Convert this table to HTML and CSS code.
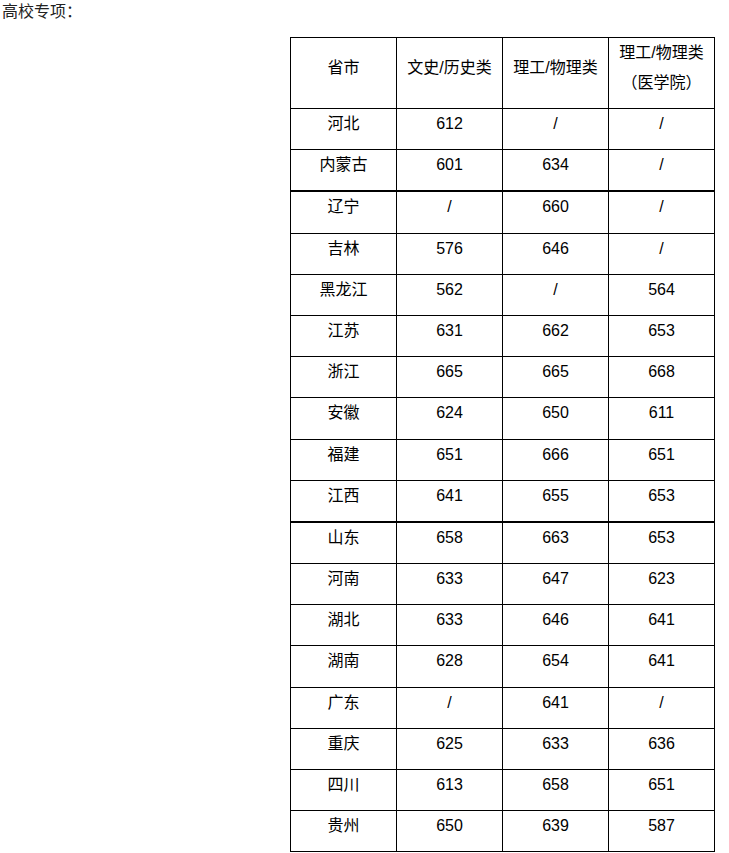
FILE: index.html
```html
<!DOCTYPE html>
<html lang="zh-CN">
<head>
<meta charset="utf-8">
<title>高校专项</title>
<link rel="stylesheet" href="styles.css">
</head>
<body>
<p class="title">高校专项：</p>
<table class="scores">
  <colgroup><col class="c"><col class="c"><col class="c"><col class="c"></colgroup>
  <thead>
    <tr><th>省市</th><th>文史/历史类</th><th>理工/物理类</th><th>理工/物理类<br>（医学院）</th></tr>
  </thead>
  <tbody>
    <tr><td>河北</td><td>612</td><td>/</td><td>/</td></tr>
    <tr><td>内蒙古</td><td>601</td><td>634</td><td>/</td></tr>
    <tr class="thick"><td>辽宁</td><td>/</td><td>660</td><td>/</td></tr>
    <tr><td>吉林</td><td>576</td><td>646</td><td>/</td></tr>
    <tr><td>黑龙江</td><td>562</td><td>/</td><td>564</td></tr>
    <tr><td>江苏</td><td>631</td><td>662</td><td>653</td></tr>
    <tr><td>浙江</td><td>665</td><td>665</td><td>668</td></tr>
    <tr><td>安徽</td><td>624</td><td>650</td><td>611</td></tr>
    <tr><td>福建</td><td>651</td><td>666</td><td>651</td></tr>
    <tr><td>江西</td><td>641</td><td>655</td><td>653</td></tr>
    <tr class="thick"><td>山东</td><td>658</td><td>663</td><td>653</td></tr>
    <tr><td>河南</td><td>633</td><td>647</td><td>623</td></tr>
    <tr><td>湖北</td><td>633</td><td>646</td><td>641</td></tr>
    <tr><td>湖南</td><td>628</td><td>654</td><td>641</td></tr>
    <tr><td>广东</td><td>/</td><td>641</td><td>/</td></tr>
    <tr><td>重庆</td><td>625</td><td>633</td><td>636</td></tr>
    <tr><td>四川</td><td>613</td><td>658</td><td>651</td></tr>
    <tr><td>贵州</td><td>650</td><td>639</td><td>587</td></tr>
  </tbody>
</table>
</body>
</html>
```
FILE: styles.css
```css
html, body {
  margin: 0;
  padding: 0;
  background: #fff;
}
body {
  font-family: "Liberation Sans", "Noto Sans CJK SC", sans-serif;
  font-size: 16px;
  color: #000;
}
.title {
  margin: 0 0 13px 0;
  padding: 0 0 0 2px;
  line-height: 24px;
  color: #222;
}
.scores {
  margin-left: 290px;
  border-collapse: collapse;
  table-layout: fixed;
  width: 425px;
}
.scores .c {
  width: 106px;
}
.scores th,
.scores td {
  border: 1px solid #000;
  font-weight: normal;
  text-align: center;
  padding: 0;
}
.scores th {
  height: 60px;
  padding-bottom: 10px;
  line-height: 30px;
  vertical-align: middle;
}
.scores td {
  height: 40.2px;
  line-height: 29px;
  vertical-align: top;
}
.scores tr.thick td {
  border-top: 2px solid #000;
}
```
